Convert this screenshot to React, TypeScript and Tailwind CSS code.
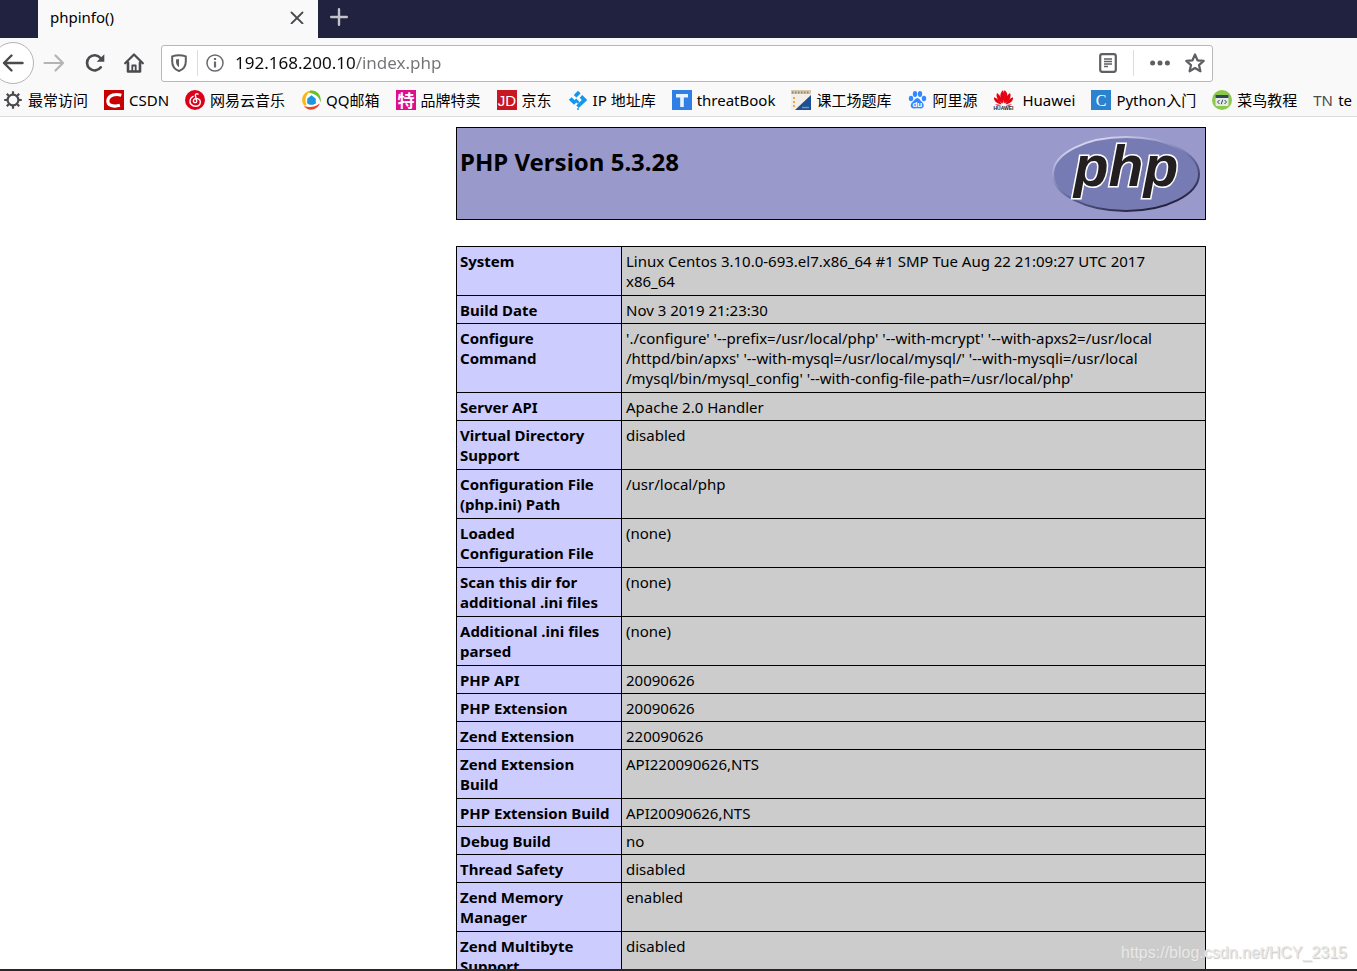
import type { ReactNode } from "react";

interface Bookmark {
  label: string;
  icon: ReactNode;
}

interface InfoRow {
  name: string;
  value: string;
  // height follows the number of text lines in the row
  height: string;
}

const ONE = "h-7";
const TWO = "h-[49px]";
const THREE = "h-[69px]";

const rows: InfoRow[] = [
  {
    name: "System",
    value: "Linux Centos 3.10.0-693.el7.x86_64 #1 SMP Tue Aug 22 21:09:27 UTC 2017\nx86_64",
    height: TWO,
  },
  { name: "Build Date", value: "Nov 3 2019 21:23:30", height: ONE },
  {
    name: "Configure\nCommand",
    value:
      "'./configure' '--prefix=/usr/local/php' '--with-mcrypt' '--with-apxs2=/usr/local\n/httpd/bin/apxs' '--with-mysql=/usr/local/mysql/' '--with-mysqli=/usr/local\n/mysql/bin/mysql_config' '--with-config-file-path=/usr/local/php'",
    height: THREE,
  },
  { name: "Server API", value: "Apache 2.0 Handler", height: ONE },
  { name: "Virtual Directory\nSupport", value: "disabled", height: TWO },
  { name: "Configuration File\n(php.ini) Path", value: "/usr/local/php", height: TWO },
  { name: "Loaded\nConfiguration File", value: "(none)", height: TWO },
  { name: "Scan this dir for\nadditional .ini files", value: "(none)", height: TWO },
  { name: "Additional .ini files\nparsed", value: "(none)", height: TWO },
  { name: "PHP API", value: "20090626", height: ONE },
  { name: "PHP Extension", value: "20090626", height: ONE },
  { name: "Zend Extension", value: "220090626", height: ONE },
  { name: "Zend Extension\nBuild", value: "API220090626,NTS", height: TWO },
  { name: "PHP Extension Build", value: "API20090626,NTS", height: ONE },
  { name: "Debug Build", value: "no", height: ONE },
  { name: "Thread Safety", value: "disabled", height: ONE },
  { name: "Zend Memory\nManager", value: "enabled", height: TWO },
  { name: "Zend Multibyte\nSupport", value: "disabled", height: TWO },
];

const bookmarks: Bookmark[] = [
  {
    label: "最常访问",
    icon: (
      <svg viewBox="0 0 20 20" className="size-5" fill="none" stroke="#4a4a4f">
        <circle cx="10" cy="10" r="5.400" strokeWidth="2.200" />
        <path
          d="M10 1.200v3.500M10 15.300v3.500M1.200 10h3.500M15.300 10h3.500M3.800 3.800l2.400 2.400M13.800 13.800l2.400 2.400M16.200 3.800l-2.400 2.400M6.200 13.800l-2.400 2.400"
          strokeWidth="2.200"
        />
      </svg>
    ),
  },
  {
    label: "CSDN",
    icon: (
      <svg viewBox="0 0 20 20" className="size-5">
        <rect width="20" height="20" fill="#c70000" />
        <path
          d="M17.300 5.200C12 3.600 4.800 4.600 3.900 10.300c-.9 5.600 6.300 6.600 12 5"
          fill="none"
          stroke="#fff"
          strokeWidth="3.200"
        />
      </svg>
    ),
  },
  {
    label: "网易云音乐",
    icon: (
      <svg viewBox="0 0 20 20" className="size-5">
        <circle cx="10" cy="10" r="10" fill="#dd001b" />
        <path
          d="M13 4.200c-1.600-1-3 0-2.600 1.500l1.300 5.100c.3 2.400-3.300 2.500-3.300.2 0-2 2.200-2.900 4.200-2.300 4 1.300 3.700 7.300-1.900 7.600-4.300 0-6.300-3.300-5.600-6.200.4-1.800 1.500-3 3-3.700"
          fill="none"
          stroke="#fff"
          strokeWidth="1.400"
          strokeLinecap="round"
        />
      </svg>
    ),
  },
  {
    label: "QQ邮箱",
    icon: (
      <svg viewBox="0 0 20 20" className="size-5">
        <circle cx="10" cy="10" r="9" fill="#fff" />
        <path d="M3 15.500C-1.500 9 2.500 1 10.500.4 5 3.500 3.300 9 5.500 15z" fill="#fcb714" />
        <path d="M9.500.5C16.500-.3 21 6 19.500 12.500 18.500 7.500 15 3.500 8 3z" fill="#6abf2b" />
        <path d="M18.800 13.500C16 20.500 7 22 2.800 15.800c5 2.300 11 1.500 16-2.300z" fill="#f4421a" />
        <path d="M6.300 8.500 10.500 5.200l4.200 3.300.2 4.900-2.700 1.300H8.500L6.100 13.200z" fill="#1e96dc" />
      </svg>
    ),
  },
  {
    label: "品牌特卖",
    icon: (
      <svg viewBox="0 0 20 20" className="size-5">
        <rect width="20" height="20" fill="#de0d8c" />
        <text x="10" y="16.500" textAnchor="middle" fontSize="17" fontWeight="700" fill="#fff">
          特
        </text>
      </svg>
    ),
  },
  {
    label: "京东",
    icon: (
      <svg viewBox="0 0 20 20" className="size-5">
        <rect width="20" height="20" fill="#c81623" />
        <text
          x="10"
          y="16"
          textAnchor="middle"
          fontSize="15"
          fontFamily="Liberation Sans, sans-serif"
          fill="#fff"
        >
          JD
        </text>
      </svg>
    ),
  },
  {
    label: "IP 地址库",
    icon: (
      <svg viewBox="0 0 20 20" className="size-5" fill="#1296ee">
        <path d="m10 .8 2.600 2.600-4.200 4.200-2.600-2.600z" />
        <path d="m3.600 7.200 2.600 2.600 2.400 2.400-2.600 2.600L.8 9.800z" />
        <path d="m14.200 5 5 5-8.400 8-2.500-2.500 5.500-5.500-2.100-2.300z" />
        <path d="m8.200 8.500 3.400 3.400-1.900 1.900-3.400-3.400z" />
        <circle cx="10" cy="19" r="1" />
      </svg>
    ),
  },
  {
    label: "threatBook",
    icon: (
      <svg viewBox="0 0 20 20" className="size-5">
        <rect width="20" height="20" fill="#2f7fe4" />
        <path d="M4 4h12v3.500h-4.200V17H8.200V7.500H4z" fill="#e8f3ff" />
      </svg>
    ),
  },
  {
    label: "课工场题库",
    icon: (
      <svg viewBox="0 0 20 20" className="size-5">
        <rect width="20" height="20" fill="#f3efe8" />
        <path d="M0 0h20v4H0z" fill="#d5c8ad" />
        <path d="M1 2.500h18" stroke="#8f8770" strokeWidth="2" strokeDasharray="1.500 1.500" />
        <path d="M20 5v15H4z" fill="#1c4f94" />
        <path d="M3 7v11" stroke="#e9a84b" strokeWidth="2" strokeDasharray="2 2" />
        <path d="M11 17.500h7" stroke="#7892b7" strokeWidth="1.500" />
      </svg>
    ),
  },
  {
    label: "阿里源",
    icon: (
      <svg viewBox="0 0 20 20" className="size-5" fill="#3388ff">
        <ellipse cx="4" cy="8.500" rx="2.200" ry="2.700" />
        <ellipse cx="8" cy="4" rx="2.200" ry="2.900" />
        <ellipse cx="13" cy="4" rx="2.200" ry="2.900" />
        <ellipse cx="17" cy="8.500" rx="2.200" ry="2.700" />
        <path d="M10.300 8c2 0 2.700 2.300 4.700 4 3 2.500 2 6.700-1.500 6.500-2-.2-4.500-.2-6.400 0-3.600.2-4.600-4-1.600-6.500 2-1.700 2.800-4 4.800-4z" />
        <text
          x="10.300"
          y="17"
          textAnchor="middle"
          fontSize="8"
          fontWeight="700"
          fontFamily="Liberation Sans, sans-serif"
          fill="#fff"
        >
          du
        </text>
      </svg>
    ),
  },
  {
    label: "Huawei",
    icon: (
      <svg viewBox="0 0 24 20" className="h-5 w-6">
        <g fill="#e60012">
          <path d="M9.800 13.500C5.800 8 7 2 10.200.3c1.300 3.800 1.200 8 0 13z" />
          <path d="M11.200 13.500C10 8.500 10 4 11.300.3 15 2 15.800 8 11.200 13.500z" />
          <path d="M9.200 13.500C4.500 10.500 2.600 6 4 3c3 2 5 6 5.200 10.500z" />
          <path d="M12 13.500C12 9 14 5 17 3c1.500 3 .2 7.500-5 10.500z" />
          <path d="M8.600 14.200C4 14 .5 11 1 7.300c3.200 1 6 3.500 7.600 6.900z" />
          <path d="M12.500 14.200C14 10.500 17 8.300 20 7.300c.6 3.700-3 6.700-7.500 6.900z" />
          <path d="M8.500 14.900c-2.500 1.300-4.700 1-6.200-.7zM12.500 14.900c2.500 1.300 4.700 1 6.200-.7z" />
        </g>
        <text
          x="10.500"
          y="20"
          textAnchor="middle"
          fontSize="5"
          fontWeight="700"
          fontFamily="Liberation Sans, sans-serif"
          fill="#231815"
        >
          HUAWEI
        </text>
      </svg>
    ),
  },
  {
    label: "Python入门",
    icon: (
      <svg viewBox="0 0 20 20" className="size-5">
        <rect width="20" height="20" fill="#2c82cf" />
        <text
          x="10"
          y="15.500"
          textAnchor="middle"
          fontSize="16"
          fontFamily="Liberation Serif, serif"
          fill="#fff"
        >
          C
        </text>
      </svg>
    ),
  },
  {
    label: "菜鸟教程",
    icon: (
      <svg viewBox="0 0 20 20" className="size-5">
        <circle cx="10" cy="10" r="10" fill="#8cc84b" />
        <rect x="3.500" y="5" width="13" height="11" rx="1" fill="#e6ebe6" />
        <path d="M3.500 5h13v3h-13z" fill="#33475b" />
        <path d="m7.500 10-2 2 2 2M12.500 10l2 2-2 2M10.700 9.800l-1.400 4.400" fill="none" stroke="#33475b" />
      </svg>
    ),
  },
  {
    label: "te",
    icon: <span className="w-5 text-[#4a4a4f]">TN</span>,
  },
];

function TabStrip() {
  return (
    <div className="flex h-[38px] shrink-0 bg-[#20223f] pl-[38px]">
      <div className="flex w-[280px] items-center justify-between bg-[#f9f9fa] pr-3.5 pb-1 pl-3">
        <span className="text-[15px]">phpinfo()</span>
        <button type="button" aria-label="Close tab">
          <svg viewBox="0 0 14 14" className="size-3.5" stroke="#4a4a4f" strokeWidth="1.800" strokeLinecap="round">
            <path d="M1.500 2.500l11 11M12.500 2.500l-11 11" />
          </svg>
        </button>
      </div>
      <button type="button" aria-label="New tab" className="px-3 pb-1">
        <svg viewBox="0 0 18 18" className="size-[18px]" stroke="#c3c3ca" strokeWidth="2.400" strokeLinecap="round">
          <path d="M9 1.200v15.600M1.200 9h15.600" />
        </svg>
      </button>
    </div>
  );
}

function NavBar() {
  return (
    <div className="flex h-[50px] shrink-0 items-center">
      <button
        type="button"
        aria-label="Back"
        className="-ml-2 flex size-[42px] items-center justify-center rounded-full border border-[#b5b5b8] bg-white"
      >
        <svg viewBox="0 0 22 20" className="h-5 w-[22px]" fill="none" stroke="#4a4a4f" strokeWidth="2.400" strokeLinecap="round" strokeLinejoin="round">
          <path d="M20.500 10H2M9.500 2.500 2 10l7.500 7.500" />
        </svg>
      </button>
      <button type="button" aria-label="Forward" className="ml-[9px]">
        <svg viewBox="0 0 22 20" className="h-5 w-[22px]" fill="none" stroke="#b4b4b6" strokeWidth="2.200" strokeLinecap="round" strokeLinejoin="round">
          <path d="M1.500 10H20M12.500 2.500 20 10l-7.500 7.500" />
        </svg>
      </button>
      <button type="button" aria-label="Reload" className="ml-[19px]">
        <svg viewBox="0 0 22 20" className="h-5 w-[22px]" fill="none" stroke="#4a4a4f" strokeWidth="2.600" strokeLinecap="round">
          <path d="M16.800 14.300A7.600 7.600 0 1 1 16.500 5" />
          <path d="M20.300 1.200v7.600h-7.600z" fill="#4a4a4f" stroke="none" />
        </svg>
      </button>
      <button type="button" aria-label="Home" className="ml-[18px]">
        <svg viewBox="0 0 20 20" className="size-5" fill="none" stroke="#4a4a4f" strokeLinecap="round" strokeLinejoin="round">
          <path d="M1.200 10.300 10 1.500l8.800 8.800" strokeWidth="2.200" />
          <path d="M4 9.500v9h12v-9" strokeWidth="2.600" />
          <path d="M8.300 18v-5.500h3.400V18" strokeWidth="1.800" />
        </svg>
      </button>
      <div className="ml-[17px] flex h-[37px] flex-1 items-center rounded-[3px] border border-[#b8b8ba] bg-white pr-[7px] pl-[9px]">
        <svg viewBox="0 0 16 18" className="h-[18px] w-4" fill="none" stroke="#5f5f63" strokeWidth="2">
          <path d="M8 1.200c2.300 0 4.500.4 6.800 1.200v5.200c0 4.800-2.500 8-6.800 9.400-4.300-1.400-6.800-4.600-6.800-9.400V2.400C3.500 1.600 5.700 1.200 8 1.200z" />
          <path d="M8 5v8.200C5.800 11.700 5 9.800 5 7.500V5.400z" fill="#5f5f63" stroke="none" />
        </svg>
        <span className="ml-2.5 h-[26px] w-px bg-[#dcdcde]" />
        <svg viewBox="0 0 18 18" className="ml-2 size-[18px]" fill="none" stroke="#6b6b6f">
          <circle cx="9" cy="9" r="8" strokeWidth="1.500" />
          <path d="M9 7.500v6M9 4v2" strokeWidth="2.200" />
        </svg>
        {/* host part is drawn darker than the path */}
        <input
          aria-label="Address"
          defaultValue="192.168.200.10/index.php"
          className="ml-[11px] min-w-0 flex-1 bg-[linear-gradient(to_right,#0c0c0d_120px,#737378_120px)] bg-clip-text text-[17px] text-transparent outline-none"
        />
        <button type="button" aria-label="Reader view">
          <svg viewBox="0 0 18 20" className="h-5 w-[18px]" fill="none" stroke="#5f5f63">
            <rect x="1.200" y="1.200" width="15.600" height="17.600" rx="2" strokeWidth="2.200" />
            <path d="M5 6h8M5 8.500h8M5 11h8M5 13.500h4" strokeWidth="1.300" />
          </svg>
        </button>
        <span className="ml-4 h-[26px] w-px bg-[#dcdcde]" />
        <button type="button" aria-label="Page actions" className="ml-4">
          <svg viewBox="0 0 20 6" className="h-1.5 w-5" fill="#5f5f63">
            <circle cx="2.600" cy="3" r="2.500" />
            <circle cx="10" cy="3" r="2.500" />
            <circle cx="17.400" cy="3" r="2.500" />
          </svg>
        </button>
        <button type="button" aria-label="Bookmark this page" className="ml-[15px]">
          <svg viewBox="0 0 20 20" className="size-5" fill="none" stroke="#5f5f63" strokeWidth="2.200" strokeLinejoin="round">
            <path d="m10 1.500 2.500 5.800 6.200.6-4.700 4.200 1.400 6.200L10 15l-5.400 3.300L6 12.100 1.300 7.900l6.200-.6z" />
          </svg>
        </button>
      </div>
      <div className="w-36 shrink-0" />
    </div>
  );
}

function BookmarksBar() {
  return (
    <nav className="flex h-[29px] shrink-0 items-center gap-4 overflow-hidden border-b border-[#dcdcdd] pb-1 pl-[3px]">
      {bookmarks.map((bookmark) => (
        <a
          key={bookmark.label}
          href="#"
          className="flex shrink-0 items-center gap-[5px] text-[15px] leading-5 whitespace-nowrap"
        >
          {bookmark.icon}
          {bookmark.label}
        </a>
      ))}
    </nav>
  );
}

function PhpLogo() {
  return (
    <svg viewBox="0 0 150 80" className="h-20 w-[150px]" role="img" aria-label="PHP logo">
      <defs>
        <linearGradient id="rim" x1="0.200" y1="0" x2="0.800" y2="1">
          <stop offset="0" stopColor="#e4e4f6" />
          <stop offset="0.300" stopColor="#9a9ccd" />
          <stop offset="0.600" stopColor="#5a5c8e" />
          <stop offset="1" stopColor="#16162a" />
        </linearGradient>
      </defs>
      <ellipse cx="75" cy="40" rx="73" ry="37" fill="#777bb4" stroke="url(#rim)" strokeWidth="2" />
      <text
        x="75"
        y="52"
        textAnchor="middle"
        fontSize="57"
        fontWeight="700"
        fontStyle="italic"
        fontFamily="Liberation Sans, sans-serif"
        fill="#231f20"
        stroke="#fff"
        strokeWidth="3"
        paintOrder="stroke"
      >
        php
      </text>
    </svg>
  );
}

export default function App() {
  return (
    <div className="flex h-screen flex-col overflow-hidden bg-[#f9f9fa] font-['Noto_Sans','Noto_Sans_CJK_SC',sans-serif] text-black">
      <TabStrip />
      <NavBar />
      <BookmarksBar />
      <main className="relative min-h-0 flex-1 overflow-hidden bg-white pt-2.5 pl-[456px]">
        <header className="flex h-[93px] w-[750px] justify-between border border-black bg-[#9999cc] py-1.5 pr-1 pl-[3px]">
          <h1 className="pt-3 text-2xl font-bold">PHP Version 5.3.28</h1>
          <PhpLogo />
        </header>
        <table className="mt-[26px] w-[750px] table-fixed border-collapse text-[15px] leading-5">
          <tbody>
            {rows.map((row) => (
              <tr key={row.name} className={row.height}>
                <th
                  scope="row"
                  className="w-[165px] border border-black bg-[#ccccff] pt-1 pr-0 pb-0.5 pl-[3px] text-left align-top font-bold whitespace-pre"
                >
                  {row.name}
                </th>
                <td className="border border-black bg-[#cccccc] pt-1 pr-0 pb-0.5 pl-1 align-top whitespace-pre">
                  {row.value}
                </td>
              </tr>
            ))}
          </tbody>
        </table>
        <span className="absolute right-2.5 bottom-1 font-['Liberation_Sans',sans-serif] text-base text-[#e8e8e8] [text-shadow:1px_1px_1px_#c4c4c4]">
          https://blog.csdn.net/HCY_2315
        </span>
      </main>
      <div className="h-0.5 shrink-0 bg-[#2b2628]" />
    </div>
  );
}
